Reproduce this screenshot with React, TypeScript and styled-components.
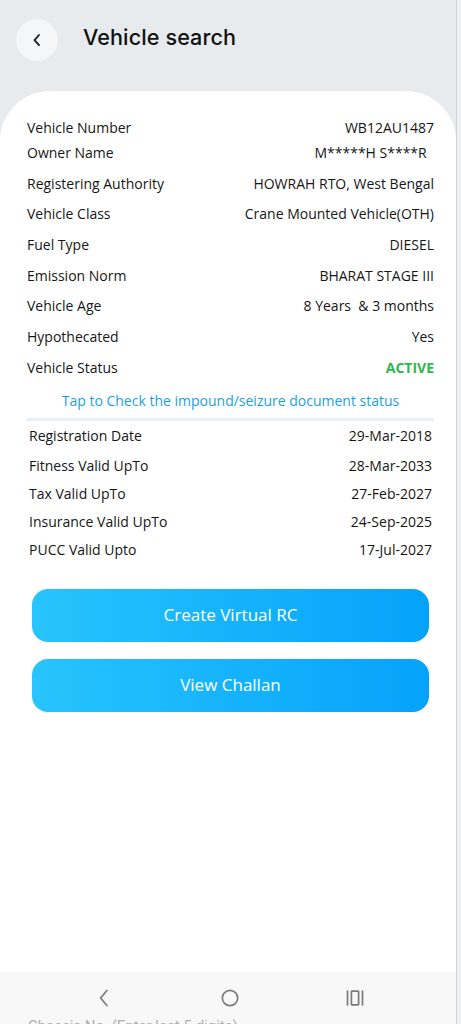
import React from "react";
import styled, { createGlobalStyle } from "styled-components";

const Global = createGlobalStyle`
  html, body { margin: 0; padding: 0; }
  body { width: 461px; height: 1024px; overflow: hidden; background: #ffffff; }
  #root { height: 1024px; }
`;

const Screen = styled.div`
  display: flex;
  width: 461px;
  height: 1024px;
  overflow: hidden;
`;

const Main = styled.div`
  width: 456px;
  display: flex;
  flex-direction: column;
  background: #e8ebee;
`;

const ScrollEdge = styled.div`
  width: 4px;
  border-left: 1px solid #d2d4d6;
  background: #eff0f2;
`;

const Header = styled.header`
  height: 91px;
  box-sizing: border-box;
  padding: 19px 0 0 16px;
  display: flex;
  align-items: flex-start;
  gap: 25px;
`;

const BackButton = styled.div`
  width: 42px;
  height: 42px;
  border-radius: 50%;
  background: #f4f6f8;
  display: flex;
  align-items: center;
  justify-content: center;
`;

const Title = styled.h1`
  margin: 0;
  height: 42px;
  display: flex;
  align-items: center;
  font-family: "Inter", "Noto Sans", sans-serif;
  font-weight: 500;
  font-size: 21.6px;
  letter-spacing: 0.1px;
  color: #111111;
  padding-bottom: 6px;
  box-sizing: border-box;
`;

const Card = styled.main`
  flex: 1;
  background: #ffffff;
  border-radius: 50px 50px 0 0;
  padding: 26px 0 0 0;
  display: flex;
  flex-direction: column;
  font-family: "Open Sans", "Noto Sans", sans-serif;
`;

const Section = styled.section<{ $inset: number }>`
  padding: 0 ${(p) => 22 + p.$inset}px 0 ${(p) => 27 + p.$inset}px;
  display: flex;
  flex-direction: column;
`;

const Row = styled.div<{ $h: number }>`
  height: ${(p) => p.$h}px;
  display: flex;
  align-items: center;
  justify-content: space-between;
  font-size: 14px;
  color: #161616;
`;

const Label = styled.span``;

const Value = styled.span<{ $status?: boolean }>`
  white-space: pre;
  color: ${(p) => (p.$status ? "#2fb84c" : "#161616")};
  font-weight: ${(p) => (p.$status ? 700 : 400)};
`;

const Link = styled.div`
  height: 35px;
  display: flex;
  align-items: center;
  justify-content: center;
  font-size: 14px;
  color: #1d9fdf;
`;

const Divider = styled.div`
  height: 3px;
  background: #e6eff3;
  margin: 0 22px 0 27px;
`;

const Buttons = styled.div`
  margin-top: 25px;
  padding: 0 27px 0 32px;
  display: flex;
  flex-direction: column;
  gap: 17px;
`;

const Button = styled.button`
  height: 53px;
  border: none;
  border-radius: 16px;
  background: linear-gradient(90deg, #27c4fd 0%, #05a2fb 100%);
  color: #ffffff;
  font-family: "Open Sans", "Noto Sans", sans-serif;
  font-size: 17px;
  font-weight: 500;
  display: flex;
  align-items: center;
  justify-content: center;
  padding: 0 0 2px 0;
`;

const Spacer = styled.div`
  flex: 1;
`;

const NavBar = styled.nav`
  height: 52px;
  background: #f8f8f8;
  display: flex;
  flex-direction: column;
`;

const NavIcons = styled.div`
  height: 52px;
  flex-shrink: 0;
  display: flex;
  align-items: center;
`;

const NavSlot = styled.div<{ $x: number }>`
  width: 0;
  margin-left: ${(p) => p.$x}px;
  display: flex;
  justify-content: center;
  & > svg { flex-shrink: 0; }
`;

const PeekText = styled.div`
  margin-top: -7px;
  padding-left: 28px;
  font-family: "Roboto", "Noto Sans", sans-serif;
  font-size: 15px;
  color: #b0b0b0;
  white-space: nowrap;
`;

const details: [string, string, boolean?][] = [
  ["Owner Name", "M*****H S****R  "],
  ["Registering Authority", "HOWRAH RTO, West Bengal"],
  ["Vehicle Class", "Crane Mounted Vehicle(OTH)"],
  ["Fuel Type", "DIESEL"],
  ["Emission Norm", "BHARAT STAGE III"],
  ["Vehicle Age", "8 Years  & 3 months"],
  ["Hypothecated", "Yes"],
  ["Vehicle Status", "ACTIVE", true],
];

const dates: [string, string, number][] = [
  ["Registration Date", "29-Mar-2018", 30],
  ["Fitness Valid UpTo", "28-Mar-2033", 29],
  ["Tax Valid UpTo", "27-Feb-2027", 28],
  ["Insurance Valid UpTo", "24-Sep-2025", 28],
  ["PUCC Valid Upto", "17-Jul-2027", 28],
];

export default function App() {
  return (
    <>
      <Global />
      <Screen>
        <Main>
          <Header>
            <BackButton>
              <svg width="16" height="16" viewBox="0 0 16 16" fill="none">
                <path d="M10 3 L5.5 8.2 L10 13.2" stroke="#1a1a1a" strokeWidth="1.8" strokeLinecap="round" strokeLinejoin="round" />
              </svg>
            </BackButton>
            <Title>Vehicle search</Title>
          </Header>
          <Card>
            <Section $inset={0}>
              <Row $h={20}>
                <Label>Vehicle Number</Label>
                <Value>WB12AU1487</Value>
              </Row>
              {details.map(([l, v, s]) => (
                <Row key={l} $h={30.7}>
                  <Label>{l}</Label>
                  <Value $status={s}>{v}</Value>
                </Row>
              ))}
              <Link>Tap to Check the impound/seizure document status</Link>
            </Section>
            <Divider />
            <Section $inset={2}>
              {dates.map(([l, v, h]) => (
                <Row key={l} $h={h}>
                  <Label>{l}</Label>
                  <Value>{v}</Value>
                </Row>
              ))}
            </Section>
            <Buttons>
              <Button>Create Virtual RC</Button>
              <Button>View Challan</Button>
            </Buttons>
            <Spacer />
            <NavBar>
              <NavIcons>
                <NavSlot $x={104}>
                  <svg width="14" height="20" viewBox="0 0 14 20" fill="none">
                    <path d="M10 2.5 L3.5 10 L10 17.5" stroke="#7a7a7a" strokeWidth="1.7" strokeLinecap="round" strokeLinejoin="round" />
                  </svg>
                </NavSlot>
                <NavSlot $x={126}>
                  <svg width="20" height="20" viewBox="0 0 20 20" fill="none">
                    <circle cx="10" cy="10" r="7.7" stroke="#7a7a7a" strokeWidth="1.7" />
                  </svg>
                </NavSlot>
                <NavSlot $x={125}>
                  <svg width="20" height="18" viewBox="0 0 20 18" fill="none">
                    <path d="M2.5 2 V16 M17.5 2 V16" stroke="#7a7a7a" strokeWidth="1.7" strokeLinecap="round" />
                    <rect x="6.4" y="2.2" width="7.2" height="13.6" rx="0.6" stroke="#7a7a7a" strokeWidth="1.7" />
                  </svg>
                </NavSlot>
              </NavIcons>
              <PeekText>Chassis No. (Enter last 5 digits)</PeekText>
            </NavBar>
          </Card>
        </Main>
        <ScrollEdge />
      </Screen>
    </>
  );
}
